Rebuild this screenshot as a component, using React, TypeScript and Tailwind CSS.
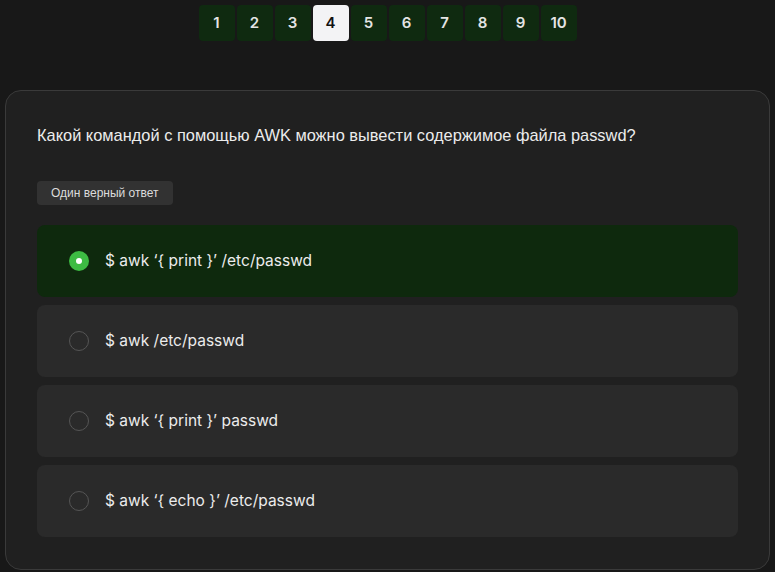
import { useState } from "react";

const PAGES = [1, 2, 3, 4, 5, 6, 7, 8, 9, 10];

const OPTIONS = [
  "$ awk ‘{ print }’ /etc/passwd",
  "$ awk /etc/passwd",
  "$ awk ‘{ print }’ passwd",
  "$ awk ‘{ echo }’ /etc/passwd",
];

export default function App() {
  const [page, setPage] = useState(4);
  const [selected, setSelected] = useState(0);

  return (
    <div className="min-h-[572px] w-[775px] bg-[#181818] font-['Liberation_Sans',Arial,sans-serif] text-[#e6e6e6]">
      <div className="flex justify-center gap-[2px] pt-[5px]">
        {PAGES.map((n) => (
          <button
            key={n}
            type="button"
            onClick={() => setPage(n)}
            className={`flex h-9 w-9 items-center justify-center rounded-[4px] font-['Inter',sans-serif] text-[15px] font-semibold ${
              n === page ? "bg-[#f3f3f5] text-[#111]" : "bg-[#0f2a10] text-[#e4e4e4]"
            }`}
          >
            {n}
          </button>
        ))}
      </div>

      <div className="mx-[5px] mt-[49px] rounded-[16px] border border-[#3a3a3a] bg-[#202020] px-[31px] pb-[32px] pt-[34px]">
        <p className="text-[16.4px] leading-[20px] text-[#ececec]">
          Какой командой с помощью AWK можно вывести содержимое файла passwd?
        </p>

        <div className="mt-[36px] inline-block rounded-[4px] bg-[#323232] px-[14px] py-[5px] text-[12px] leading-[14px] text-[#dcdcdc]">
          Один верный ответ
        </div>

        <div className="mt-[20px] flex flex-col gap-[8px]">
          {OPTIONS.map((text, i) => {
            const active = i === selected;
            return (
              <button
                key={text}
                type="button"
                onClick={() => setSelected(i)}
                className={`flex h-[72px] items-center rounded-[8px] pl-[32px] text-left ${
                  active ? "bg-[#0e290d]" : "bg-[#2a2a2a]"
                }`}
              >
                {active ? (
                  <span className="flex h-5 w-5 items-center justify-center rounded-full bg-[#3dbb43]">
                    <span className="h-[6px] w-[6px] rounded-full bg-white" />
                  </span>
                ) : (
                  <span className="h-5 w-5 rounded-full border border-[#555]" />
                )}
                <span className="ml-[16px] font-['Inter',sans-serif] text-[15.5px] text-[#ececec]">{text}</span>
              </button>
            );
          })}
        </div>
      </div>
    </div>
  );
}
